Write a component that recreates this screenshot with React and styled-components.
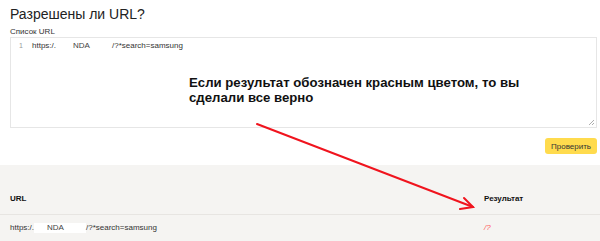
import React from 'react';
import styled, { createGlobalStyle } from 'styled-components';

const GlobalStyle = createGlobalStyle`
  html, body {
    margin: 0;
    padding: 0;
    background: #fff;
  }
  body {
    font-family: "Liberation Sans", Arial, sans-serif;
    color: #222;
  }
`;

const Page = styled.div`
  position: relative;
  width: 600px;
  height: 241px;
  overflow: hidden;
  background: #fff;
`;

const Top = styled.div`
  padding: 5px 3px 11px 10px;
`;

const Title = styled.h1`
  margin: 0 0 4px;
  font-size: 14px;
  line-height: 18px;
  font-weight: 400;
  color: #222;
`;

const Label = styled.div`
  font-size: 8px;
  line-height: 10px;
  color: #333;
`;

const Editor = styled.div`
  position: relative;
  box-sizing: border-box;
  height: 91px;
  border: 1.5px solid #e6e6e6;
  padding: 3px 0 0 8px;
`;

const Line = styled.div`
  display: flex;
  align-items: center;
  font-size: 8px;
  line-height: 10px;
  color: #333;
`;

const Gutter = styled.span`
  width: 4px;
  margin-right: 9px;
  color: #999;
  font-size: 7px;
  text-align: right;
`;

const Redacted = styled.span`
  display: inline-block;
  box-sizing: border-box;
  width: ${(p) => p.$width}px;
  padding-left: ${(p) => p.$pad}px;
  background: #fff;
  color: #444;
`;

const Grip = styled.svg`
  position: absolute;
  right: 1px;
  bottom: 1px;
`;

const Note = styled.div`
  position: absolute;
  left: 178px;
  top: 37px;
  font-size: 13.2px;
  line-height: 15px;
  font-weight: 700;
  color: #111;
`;

const Actions = styled.div`
  display: flex;
  justify-content: flex-end;
  margin-top: 10px;
`;

const Button = styled.button`
  height: 16px;
  padding: 0 6px;
  border: none;
  border-radius: 3px;
  background: #ffdb4d;
  font-family: inherit;
  font-size: 8px;
  color: #333;
  cursor: pointer;
`;

const Results = styled.div`
  height: 76px;
  background: #f5f4f2;
  padding-left: 10px;
`;

const TableRow = styled.div`
  display: grid;
  grid-template-columns: 474px 1fr;
  font-size: 8px;
  line-height: 10px;
  color: #333;
  padding: ${(p) => (p.$head ? '29px 0 10px' : '8px 0 0')};
  font-weight: ${(p) => (p.$head ? 700 : 400)};
  border-bottom: ${(p) => (p.$head ? '1px solid #e7e5e2' : 'none')};
  margin-left: ${(p) => (p.$head ? '-10px' : '0')};
  padding-left: ${(p) => (p.$head ? '10px' : '0')};
  ${(p) => p.$head && 'color: #111;'}
`;

const ResultCell = styled.span`
  color: #ff5a5a;
  font-style: italic;
`;

const Arrow = styled.svg`
  position: absolute;
  left: 0;
  top: 0;
  pointer-events: none;
`;

export default function App() {
  return (
    <>
      <GlobalStyle />
      <Page>
        <Top>
          <Title>Разрешены ли URL?</Title>
          <Label>Список URL</Label>
          <Editor>
            <Line>
              <Gutter>1</Gutter>
              <span>https:/.</span>
              <Redacted $width={56} $pad={17}>NDA</Redacted>
              <span>/?*search=samsung</span>
            </Line>
            <Note>
              Если результат обозначен красным цветом, то вы
              <br />
              сделали все верно
            </Note>
            <Grip width="7" height="7" viewBox="0 0 7 7">
              <path d="M6 1 L1 6 M6 4 L4 6" stroke="#999" strokeWidth="0.8" />
            </Grip>
          </Editor>
          <Actions>
            <Button>Проверить</Button>
          </Actions>
        </Top>
        <Results>
          <TableRow $head>
            <span>URL</span>
            <span>Результат</span>
          </TableRow>
          <TableRow>
            <span>
              https:/.
              <Redacted $width={52} $pad={13}>NDA</Redacted>
              /?*search=samsung
            </span>
            <ResultCell>/?</ResultCell>
          </TableRow>
        </Results>
        <Arrow width="600" height="241" viewBox="0 0 600 241">
          <g stroke="#f0141e" strokeWidth="2" fill="none" strokeLinecap="round">
            <path d="M257 124 L473 207" />
            <path d="M464 198 L473 207 L460 209" />
          </g>
        </Arrow>
      </Page>
    </>
  );
}
